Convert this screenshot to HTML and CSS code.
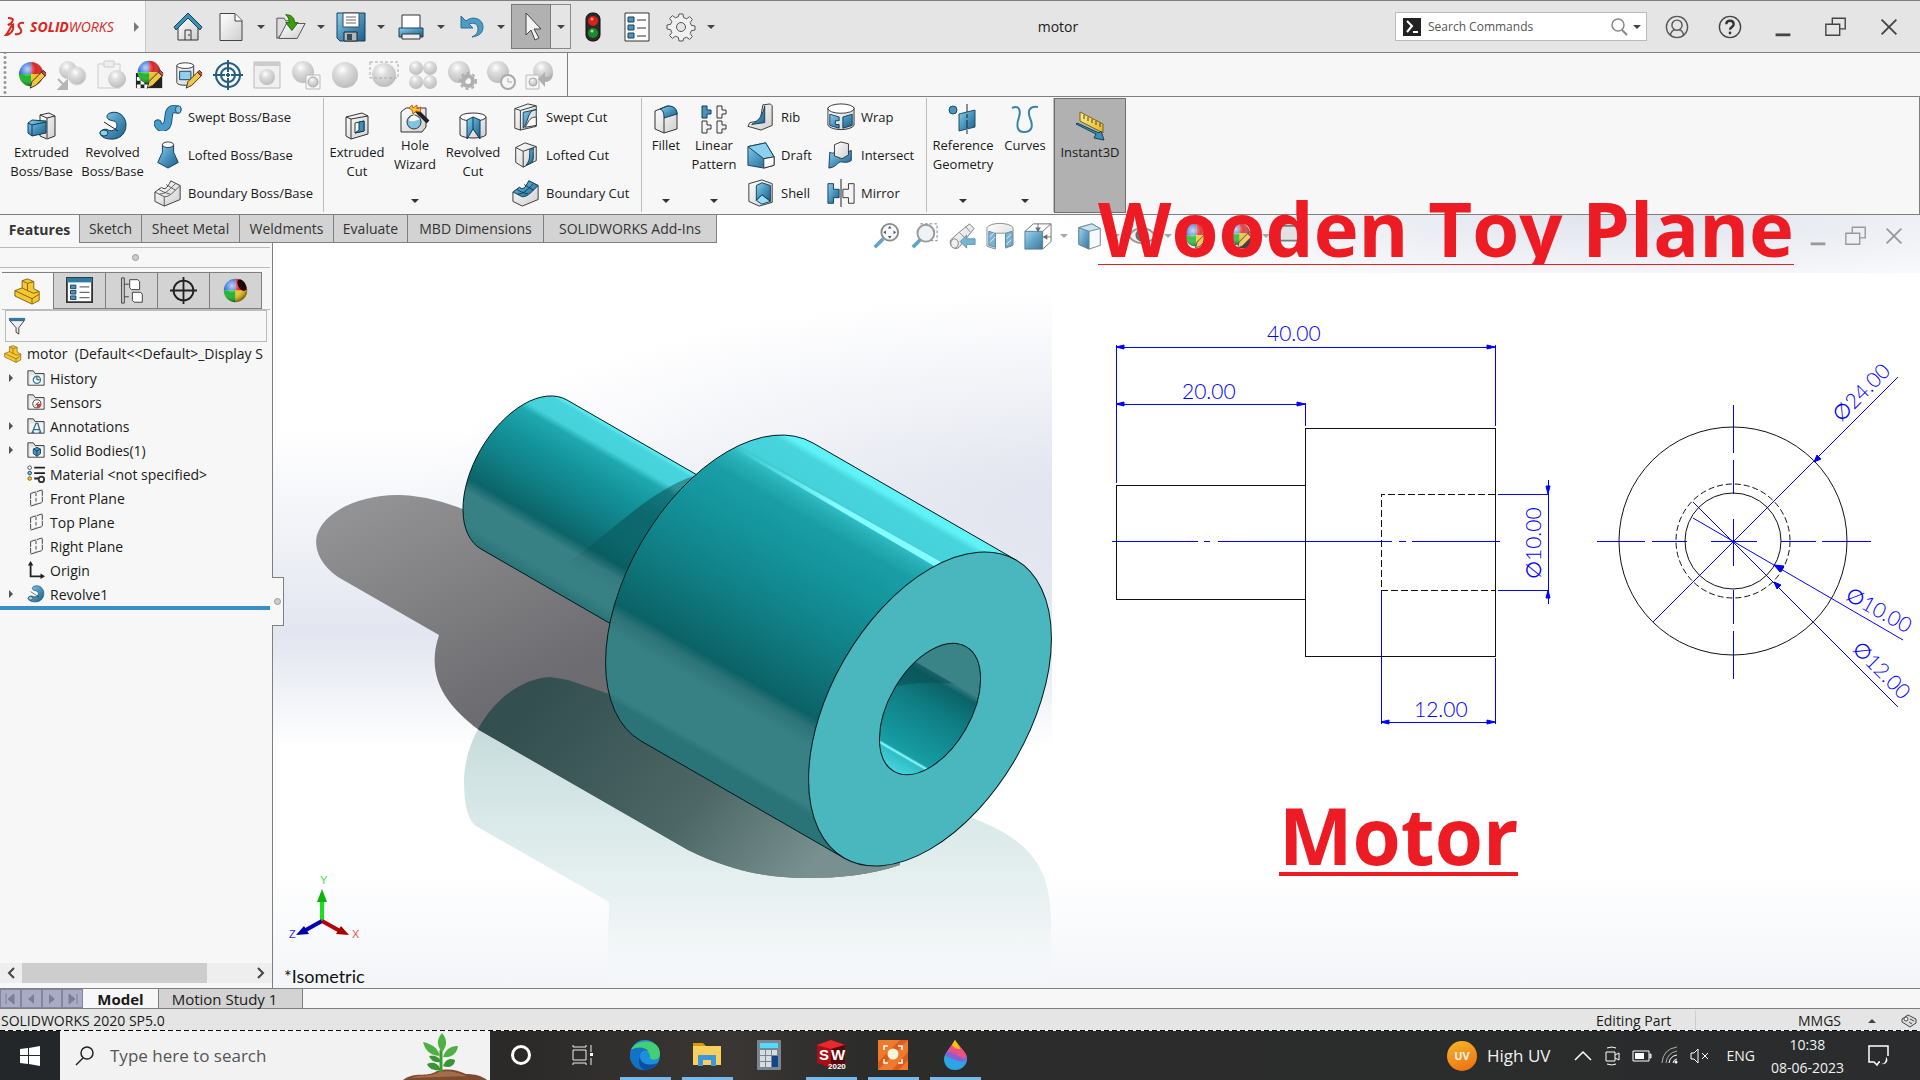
FILE: index.html
```
<!DOCTYPE html>
<html lang="en">
<head>
    <meta charset="utf-8">
    <title>motor</title>
    <link rel="stylesheet" href="styles.css">
</head>
<body>
    <!-- icon sheet -->
    <svg class="sheet" width="0" height="0" aria-hidden="true">
        <defs>
            <linearGradient id="blue" x1="0" y1="0" x2="1" y2="1"><stop offset="0" stop-color="#8fd0ee"/><stop offset=".5" stop-color="#4a94bd"/><stop offset="1" stop-color="#1d5f86"/></linearGradient>
            <linearGradient id="pale" x1="0" y1="0" x2="1" y2="1"><stop offset="0" stop-color="#fff"/><stop offset="1" stop-color="#cfcfcf"/></linearGradient>
            <linearGradient id="gold" x1="0" y1="0" x2="1" y2="1"><stop offset="0" stop-color="#fff08a"/><stop offset="1" stop-color="#e8b21c"/></linearGradient>
            <radialGradient id="grey" cx=".4" cy=".3" r=".7"><stop offset="0" stop-color="#fff"/><stop offset=".35" stop-color="#dedede"/><stop offset="1" stop-color="#bdbdbd"/></radialGradient>
            <radialGradient id="shine" cx=".35" cy=".3" r=".7"><stop offset="0" stop-color="#fff" stop-opacity=".7"/><stop offset=".5" stop-color="#fff" stop-opacity="0"/><stop offset="1" stop-color="#000" stop-opacity=".45"/></radialGradient>
        </defs>
        <symbol id="i-home" viewBox="0 0 30 30"><path d="M5 14v14h20V14L15 4z" fill="url(#pale)" stroke="#333"/><path d="M1 15 15 1l14 14-2 3L15 6 3 18z" fill="#3d8fb8" stroke="#17405a"/><path d="M12 28v-10h6v10M16 22v2" fill="none" stroke="#333"/></symbol>
        <symbol id="i-new" viewBox="0 0 30 30"><path d="M4 1.500h15l7 7v20H4z" fill="url(#pale)" stroke="#444"/><path d="M19 2v7h7" fill="#fff" stroke="#444"/></symbol>
        <symbol id="i-open" viewBox="0 0 34 30"><path d="M1 28V5h8l2 3h6v6z" fill="#ddd" stroke="#444"/><path d="M3 28 12 11h21l-9 17z" fill="url(#pale)" stroke="#444"/><path d="M11 1c7 0 10 4 10 9h4l-7 9-7-9h4c0-4-1-6-4-9z" fill="#3a9d12" stroke="#1d5f05"/></symbol>
        <symbol id="i-save" viewBox="0 0 30 30"><path d="M1 1h28v28H4l-3-3z" fill="url(#blue)" stroke="#123e59"/><path d="M7 1h16v14H7z" fill="#fff" stroke="#445"/><path d="M10 5h10M10 8h10M10 11h10" stroke="#666"/><path d="M8 20h13v9H8z" fill="#b5b5b5" stroke="#222"/><path d="M11 22h5v6h-5z" fill="#2e4e62"/></symbol>
        <symbol id="i-print" viewBox="0 0 30 30"><path d="M6 3h18v14H6z" fill="#fff" stroke="#333"/><path d="M3 16h24v9H3z" fill="url(#blue)" stroke="#17405a"/><path d="M6 22h18v5H6z" fill="#eee" stroke="#333"/></symbol>
        <symbol id="i-undo" viewBox="0 0 30 30"><path d="M5 4v12h12l-4-4c5-2 9 0 9 5 0 4-2 6-6 8 7-1 11-4 11-10 0-8-10-12-17-6z" fill="#4f9bc4" stroke="#2c6f96"/></symbol>
        <symbol id="i-cursor" viewBox="0 0 30 30"><path d="M10 1v22l5-5 4 10 4-2-5-9h7z" fill="#f3f3f3" stroke="#444"/></symbol>
        <symbol id="i-traffic" viewBox="0 0 30 30"><rect x="8" y="1" width="14" height="28" rx="6" fill="#2b2b2b" stroke="#111"/><circle cx="15" cy="9" r="5" fill="#e01e14"/><circle cx="15" cy="21" r="5" fill="#1b8a2c"/><circle cx="14" cy="7" r="1.500" fill="#ff9d8e"/><circle cx="14" cy="19" r="1.500" fill="#9fe0a2"/></symbol>
        <symbol id="i-list" viewBox="0 0 30 30"><path d="M3 1h24v28H3z" fill="#fff" stroke="#333"/><g fill="#4a94bd" stroke="#17405a"><path d="M6 5h6v5H6zM6 13h6v5H6zM6 21h6v5H6z"/></g><path d="M15 8h9M15 16h9M15 24h9" stroke="#333"/></symbol>
        <symbol id="i-gear" viewBox="0 0 30 30"><path d="m13 2 4 0 .6 3.600 3 1.200 3-2.200 2.800 2.800-2.200 3 1.200 3 3.600.6v4l-3.600.6-1.200 3 2.200 3-2.800 2.800-3-2.200-3 1.200L17 29h-4l-.6-3.600-3-1.200-3 2.200-2.800-2.800 2.200-3-1.200-3L1 17v-4l3.600-.6 1.200-3-2.200-3L6.400 3.600l3 2.200 3-1.200z" fill="#f1f1f1" stroke="#555"/><circle cx="15" cy="15" r="4.500" fill="#e5e5e5" stroke="#555"/></symbol>
        <symbol id="i-ball" viewBox="0 0 30 30"><path d="M15 15V2A13 13 0 0 0 2 15z" fill="#2f6fe0"/><path d="M15 15h13A13 13 0 0 0 15 2z" fill="#dc2222"/><path d="M15 15H2a13 13 0 0 0 13 13z" fill="#19b52a"/><path d="M15 15v13a13 13 0 0 0 13-13z" fill="#f0c419"/><circle cx="15" cy="15" r="13" fill="url(#shine)"/></symbol>
        <symbol id="i-pencil" viewBox="0 0 30 30"><path d="m13 29 2-7L25 12l4 4-10 10z" fill="#f5c542" stroke="#333"/><path d="m25 12 2-2 4 4-2 2z" fill="#d8453a" stroke="#333"/></symbol>
        <symbol id="i-paint" viewBox="0 0 32 30"><use href="#i-ball" x="-1" y="-1" width="30" height="30"/><use href="#i-pencil" width="30" height="30"/></symbol>
        <symbol id="i-check" viewBox="0 0 32 30"><path d="M1 13h28v16H1z" fill="#222"/><path d="M2 17h4v4H2zM6 21h4v4H6zM10 25h4v4h-4zM2 25h4v4H2zM22 14h4v4h-4z" fill="#fff"/><use href="#i-ball" y="-2" x="1" width="28" height="28"/><use href="#i-pencil" width="30" height="30"/></symbol>
        <symbol id="i-can" viewBox="0 0 32 30"><path d="M3 5v18c0 4 18 4 18 0V5" fill="url(#pale)" stroke="#333"/><ellipse cx="12" cy="5" rx="9" ry="3" fill="#fff" stroke="#333"/><path d="M6 11h12v9H6z" fill="#8fd0ee" stroke="#17405a"/><use href="#i-pencil" width="30" height="30"/></symbol>
        <symbol id="i-target" viewBox="0 0 30 30"><g fill="none" stroke="#245d80" stroke-width="2"><circle cx="15" cy="15" r="12"/><circle cx="15" cy="15" r="7"/><path d="M15 0v12M15 18v12M0 15h12M18 15h12M13 15h4M15 13v4"/></g></symbol>
        <symbol id="i-g1" viewBox="0 0 30 30"><circle cx="11" cy="10" r="9" fill="url(#grey)"/><circle cx="20" cy="16" r="9" fill="url(#grey)" stroke="#ddd"/><path d="m1 19 7 7M10 21v8H2z" fill="#b5b5b5" stroke="#b5b5b5" stroke-width="2"/></symbol>
        <symbol id="i-g2" viewBox="0 0 30 30"><path d="M2 4h22v24H2z" fill="#f4f4f4" stroke="#ccc"/><path d="M8 1h10v6H8z" fill="#eee" stroke="#ccc"/><circle cx="21" cy="19" r="9" fill="url(#grey)"/></symbol>
        <symbol id="i-g3" viewBox="0 0 30 30"><path d="M2 2h26v26H2z" fill="#f0f0f0" stroke="#bbb"/><path d="M2 2h26v4H2z" fill="#ccc"/><circle cx="15" cy="17" r="8" fill="url(#grey)"/></symbol>
        <symbol id="i-g4" viewBox="0 0 30 30"><circle cx="12" cy="12" r="11" fill="url(#grey)"/><path d="M15 15h14v14H15z" fill="#f6f6f6" stroke="#bbb"/><circle cx="22" cy="22" r="5" fill="url(#grey)" stroke="#aaa"/></symbol>
        <symbol id="i-g5" viewBox="0 0 30 30"><circle cx="15" cy="15" r="13" fill="url(#grey)"/></symbol>
        <symbol id="i-g6" viewBox="0 0 30 30"><circle cx="15" cy="15" r="12" fill="url(#grey)"/><path d="M1 2h28v16H1z" fill="none" stroke="#aaa" stroke-dasharray="3 2"/></symbol>
        <symbol id="i-g7" viewBox="0 0 30 30"><g fill="url(#grey)"><circle cx="8" cy="8" r="7"/><circle cx="22" cy="8" r="7"/><circle cx="8" cy="22" r="7"/><circle cx="22" cy="22" r="7"/></g></symbol>
        <symbol id="i-g8" viewBox="0 0 30 30"><circle cx="12" cy="12" r="11" fill="url(#grey)"/><circle cx="21" cy="21" r="5" fill="none" stroke="#b0b0b0" stroke-width="4"/><circle cx="21" cy="21" r="8" fill="none" stroke="#b0b0b0" stroke-width="2" stroke-dasharray="3 3"/></symbol>
        <symbol id="i-g9" viewBox="0 0 30 30"><circle cx="12" cy="12" r="11" fill="url(#grey)"/><circle cx="22" cy="22" r="7" fill="#f6f6f6" stroke="#aaa" stroke-width="2"/><path d="M22 18v4h4" fill="none" stroke="#aaa"/></symbol>
        <symbol id="i-g10" viewBox="0 0 30 30"><circle cx="18" cy="11" r="10" fill="url(#grey)"/><path d="M1 15h13v14H1z" fill="#f6f6f6" stroke="#bbb"/><circle cx="8" cy="22" r="4" fill="url(#grey)" stroke="#aaa"/><path d="M28 12c0 8-4 10-8 10v5l-7-8 7-7v5c4 0 6-1 8-5z" fill="#b0b0b0"/></symbol>

        <symbol id="i-extrude" viewBox="0 0 30 30"><path d="m13 4 9-2 6 3v20l-8 3-7-3z" fill="url(#pale)" stroke="#333"/><path d="m20 7 8-2M20 7v20M13 4l7 3" fill="none" stroke="#333"/><path d="m1 12 4-3 14 1v12L5 25l-4-3z" fill="url(#blue)" stroke="#0f3c58"/><path d="m1 12 4 2 14-3M5 14v11" fill="none" stroke="#0f3c58"/></symbol>
        <symbol id="i-revolve" viewBox="0 0 30 30"><path d="M12 2c8-3 16 3 16 12 0 10-8 15-16 14-5 0-10-3-10-6 0-3 6-5 8-3 5 2 9-1 9-5 0-4-4-4-7-5-4-1-4-6 0-7z" fill="url(#blue)" stroke="#0f3c58"/><path d="m6 11 14 9" stroke="#222"/><ellipse cx="6" cy="22" rx="4" ry="3" fill="#8fd0ee" stroke="#0f3c58"/></symbol>
        <symbol id="i-sweep" viewBox="0 0 30 30"><path d="M4 22c2 7 10 5 11-2l1-8c1-6 5-6 9-5" fill="none" stroke="#17506f" stroke-width="9" stroke-linecap="round"/><path d="M4 22c2 7 10 5 11-2l1-8c1-6 5-6 9-5" fill="none" stroke="#4a9cc8" stroke-width="7" stroke-linecap="round"/><ellipse cx="26" cy="7" rx="3" ry="4" fill="#7cc0e2" stroke="#17506f"/></symbol>
        <symbol id="i-loft" viewBox="0 0 30 30"><path d="M9 4v8L4 23l11 6 11-6-5-11V4z" fill="url(#blue)" stroke="#0f3c58"/><ellipse cx="15" cy="4" rx="6" ry="3" fill="#fff" stroke="#333"/></symbol>
        <symbol id="i-bound" viewBox="0 0 30 30"><path d="M1 14 8 9c4 3 6 1 10-7l10 5v15L11 29 1 24z" fill="url(#pale)" stroke="#333"/><path d="m1 14 10 5c5 0 7-2 17-12M11 19v10M6 16c6 0 9-3 17-11M5 11c3 2 7 4 12 5M13 6l10 6" fill="none" stroke="#555"/></symbol>
        <symbol id="i-boundcut" viewBox="0 0 30 30"><path d="M1 14 8 9c4 3 6 1 10-7l10 5v15L11 29 1 24z" fill="url(#pale)" stroke="#333"/><path d="M1 14 8 9c4 3 6 1 10-7l10 5c-10 10-12 12-17 12z" fill="url(#blue)" stroke="#0f3c58"/><path d="M6 16c6 0 9-3 17-11M5 11c3 2 7 4 12 5M13 6l10 6" fill="none" stroke="#0f3c58"/></symbol>
        <symbol id="i-cut" viewBox="0 0 30 30"><path d="m4 6 16-4 6 3v18L9 28l-5-3z" fill="url(#pale)" stroke="#333"/><path d="m4 6 5 2 17-3M9 8v20" fill="none" stroke="#333"/><path d="m13 12 9-2v10l-9 2z" fill="#fff" stroke="#333"/><path d="m13 22 4-3v-8l5-1v10z" fill="#3d8fb8" stroke="#0f3c58"/></symbol>
        <symbol id="i-wizard" viewBox="0 0 30 30"><path d="m1 8 5-4h20v19l-4 5H1z" fill="url(#pale)" stroke="#333"/><circle cx="14" cy="18" r="7" fill="#7fc4e6" stroke="#333"/><path d="M14 11c-9 5-5 9 6 4z" fill="#fff"/><path d="m16 6 12 12" stroke="#222" stroke-width="4"/><path d="m9 4 3-3 1 3 4-3v4l4-2-1 5-4-1-3 3-1-4z" fill="#ffc928" stroke="#c8541d"/></symbol>
        <symbol id="i-revcut" viewBox="0 0 30 30"><path d="M2 6v18c4 4 22 4 26 0V6" fill="url(#pale)" stroke="#333"/><ellipse cx="15" cy="6" rx="13" ry="4" fill="#fff" stroke="#333"/><path d="m9 9 6-3 7 3v19l-7-10-6 10z" fill="url(#blue)" stroke="#0f3c58"/><path d="M15 6v12" stroke="#0f3c58"/></symbol>
        <symbol id="i-sweepcut" viewBox="0 0 30 30"><path d="m3 6 14-5 9 2v22L9 29l-6-2z" fill="url(#pale)" stroke="#333"/><path d="m3 6 6 2 17-5M9 8v21" fill="none" stroke="#333"/><path d="M26 7c-10 1-7 11-14 20V10z" fill="url(#blue)" stroke="#0f3c58"/><path d="M14 26c3-4 4-11 12-11v9z" fill="#fff" stroke="#333"/></symbol>
        <symbol id="i-loftcut" viewBox="0 0 30 30"><path d="m4 7 10-5 12 4v15l-14 7-8-5z" fill="url(#pale)" stroke="#333"/><path d="m4 7 8 4 14-5M12 11v17" fill="none" stroke="#333"/><path d="M19 9c0 9 0 12-4 17l7-4c2-5 0-9 1-14z" fill="url(#blue)" stroke="#0f3c58"/></symbol>
        <symbol id="i-fillet" viewBox="0 0 30 30"><path d="M4 7 16 2c6 0 10 3 10 8v15l-13 4-9-4z" fill="url(#pale)" stroke="#333"/><path d="M9 5l8-3c6 0 9 3 9 8l-13 4c0-5-1-8-4-9z" fill="url(#blue)" stroke="#0f3c58"/><path d="M13 14v15" stroke="#333"/></symbol>
        <symbol id="i-pattern" viewBox="0 0 30 30"><g fill="#f3f3f3" stroke="#333"><path d="M3 2h5v4h4v4H8v4H3z" fill="#4a94bd" stroke="#0f3c58"/><path d="M18 2h5v4h4v4h-4v4h-5zM3 17h5v4h4v4H8v4H3zM18 17h5v4h4v4h-4v4h-5z"/></g></symbol>
        <symbol id="i-rib" viewBox="0 0 30 30"><path d="m17 2 8-1 2 2v21l-12 5L1 25l2-4 11-2z" fill="url(#pale)" stroke="#333"/><path d="M19 3v18L5 23C14 18 17 12 19 3z" fill="url(#blue)" stroke="#0f3c58"/></symbol>
        <symbol id="i-draft" viewBox="0 0 30 30"><path d="M1 6 20 2l9 15v9l-11 3-17-3z" fill="url(#blue)" stroke="#0f3c58"/><path d="M1 6 20 2l9 15-11 2z" fill="#8bd0ee" stroke="#0f3c58"/><path d="m18 19 11-2v9l-11 3z" fill="#fff" stroke="#333"/></symbol>
        <symbol id="i-shell" viewBox="0 0 30 30"><path d="m2 5 14-4 11 4v20l-14 4L2 24z" fill="url(#pale)" stroke="#333"/><path d="m10 7 6-3 9 3v17l-9-7-6 6z" fill="url(#blue)" stroke="#0f3c58"/><path d="m10 23 6-6 9 7-9 3z" fill="#9bdcf5" stroke="#0f3c58"/></symbol>
        <symbol id="i-wrap" viewBox="0 0 30 30"><path d="M1 5v19c4 6 24 6 28 0V5" fill="url(#pale)" stroke="#333"/><ellipse cx="15" cy="6" rx="14" ry="5" fill="#fff" stroke="#333"/><path d="m3 12 10 3v4H9v4h4v4l-10-3zM17 15l10-3v12l-10 3z" fill="url(#blue)" stroke="#0f3c58"/></symbol>
        <symbol id="i-intersect" viewBox="0 0 30 30"><path d="M3 12c5 3 5-2 9-2 6 0 7 4 14 0v11c-7 4-9 0-13 2-3 2-4 5-11 6z" fill="url(#blue)" stroke="#0f3c58"/><path d="m8 4 7-3 8 2v12l-7 4-8-3z" fill="url(#pale)" stroke="#333"/></symbol>
        <symbol id="i-mirror" viewBox="0 0 30 30"><path d="M1 5h6v6h6v9H7v6H1z" fill="url(#blue)" stroke="#0f3c58"/><path d="M29 5h-6v6h-6v9h6v6h6z" fill="#f3f3f3" stroke="#333"/><path d="M15 0v30" stroke="#111"/></symbol>
        <symbol id="i-ref" viewBox="0 0 30 30"><circle cx="5" cy="6" r="4" fill="#4a94bd" stroke="#17506f"/><path d="m11 10 16-4v17l-16 4z" fill="url(#blue)" stroke="#17506f"/><path d="M19 0v30" stroke="#222" stroke-dasharray="8 2 4 2"/></symbol>
        <symbol id="i-curves" viewBox="0 0 30 30"><path d="M2 4c7-3 9 2 7 9-3 9-2 15 5 15 9 0 9-7 6-14-3-8 0-12 8-11" fill="none" stroke="#3a82ab" stroke-width="2"/></symbol>
        <symbol id="i-instant" viewBox="0 0 30 30"><path d="m5 1 23 12v9L5 10z" fill="url(#gold)" stroke="#7b6316"/><path d="M9 4v4M13 6v4M17 8v4M21 10v4M25 12v4" stroke="#444"/><path d="m1 13 20 10-2 4 10 2-3-9-2 2L2 12z" fill="#3d8fb8" stroke="#17405a"/></symbol>

        <symbol id="i-zoomfit" viewBox="0 0 30 30"><circle cx="19" cy="11" r="9" fill="#f4f8fb" stroke="#777" stroke-width="2"/><path d="m19 4 2 3h-4zM19 18l2-3h-4zM12 11l3-2v4zM26 11l-3-2v4z" fill="#444"/><path d="m12 18-9 9" stroke="#4a94bd" stroke-width="4"/></symbol>
        <symbol id="i-zoomarea" viewBox="0 0 30 30"><path d="M11 2h18v18H16" fill="none" stroke="#666" stroke-dasharray="3 2"/><circle cx="17" cy="12" r="9" fill="#eef2f5" stroke="#888" stroke-width="2"/><path d="m11 19-8 8" stroke="#4a94bd" stroke-width="4"/></symbol>
        <symbol id="i-prev" viewBox="0 0 30 30"><path d="m3 19 9-8 11-9 5 5-8 10-8 10c-4 4-12-2-9-8z" fill="url(#pale)" stroke="#666"/><path d="m12 11 7 7M19 5l5 6" stroke="#777"/><ellipse cx="7" cy="23" rx="4" ry="5" fill="#eee" stroke="#666"/><path d="M29 18H20v-4l-7 7 7 7v-4h9z" fill="#5fa9cf" stroke="#4a7f9c"/></symbol>
        <symbol id="i-section" viewBox="0 0 30 30"><path d="M1 6c4-6 24-6 28 0v19l-8 3V12H10v17l-9-3z" fill="url(#pale)" stroke="#777"/><path d="m3 10 7 2v15l-7-2zM21 12l7-2v15l-7 2z" fill="#63a8cc" stroke="#41728d"/><path d="m4 16 5-5M4 22l6-6M22 18l5-5M22 24l5-5" stroke="#eef"/></symbol>
        <symbol id="i-orient" viewBox="0 0 30 30"><path d="M1 10h19v19H1z" fill="url(#blue)" stroke="#37657f"/><path d="m1 10 9-8h19v19l-9 8M20 10l9-8M15 2v8M29 16h-8" fill="none" stroke="#555"/><path d="m12 6 3 5 3-5zM25 13l-5 3 5 3z" fill="#555"/></symbol>
        <symbol id="i-cube" viewBox="0 0 30 30"><path d="m3 6 14-4 9 5v18l-12 4-11-5z" fill="#f7fafc" stroke="#4f6f82"/><path d="M3 6v18l11 5V10z" fill="url(#blue)" stroke="#4f6f82"/><path d="m3 6 14-4 9 5-12 3z" fill="#bfe2f2" stroke="#4f6f82"/></symbol>
        <symbol id="i-eye" viewBox="0 0 30 30"><path d="M1 15C7 4 23 4 29 15 23 25 7 25 1 15z" fill="#eee" stroke="#888" stroke-width="2"/><circle cx="15" cy="14" r="7" fill="#555"/></symbol>
        <symbol id="i-screen" viewBox="0 0 30 30"><path d="M2 4h25v16H2z" fill="#dedede" stroke="#666" stroke-width="2"/></symbol>

        <symbol id="i-part" viewBox="0 0 30 30"><path d="m1 14 8-3V3l6-2 7 3v8l6 3v10l-8 4L1 20z" fill="#f5c832" stroke="#7a5a0b"/><path d="m1 14 19 9 8-5M20 23v6M9 3l6 3 7-2M15 6v8l7 3 6-2M9 11l6 3" fill="none" stroke="#7a5a0b"/></symbol>
        <symbol id="i-props" viewBox="0 0 30 30"><path d="M1 1h28v27H1z" fill="#fff" stroke="#333" stroke-width="2"/><path d="M1 1h28v5H1z" fill="#2c7ca6"/><path d="M5 9h6v4H5zM5 15h6v4H5zM5 21h6v4H5z" fill="#4a94bd" stroke="#17405a"/><path d="M15 11h11M15 17h11M15 23h11" stroke="#333"/></symbol>
        <symbol id="i-config" viewBox="0 0 30 30"><path d="M4 1v28M7 1v28M4 1h3M4 29h3M7 8h5M7 22h5" stroke="#333" fill="none"/><path d="M13 3h9l2 2v9h-9l-2-2zM16 17h9l2 2v9h-9l-2-2z" fill="#fff" stroke="#333"/></symbol>
        <symbol id="i-dim" viewBox="0 0 30 30"><g fill="none" stroke="#222" stroke-width="2"><circle cx="15" cy="15" r="11"/><path d="M15 0v30M0 15h30"/></g></symbol>
        <symbol id="i-look" viewBox="0 0 30 30"><use href="#i-ball" width="30" height="30"/><ellipse cx="22" cy="9" rx="4" ry="7" fill="#1b0505" transform="rotate(-30 22 9)"/></symbol>
        <symbol id="i-filter" viewBox="0 0 20 20"><path d="M2 4h16l-6 8v7l-3-2v-5z" fill="#eee" stroke="#333"/><path d="M1 1h18v3H1z" fill="#2c7ca6"/></symbol>
        <symbol id="i-folder" viewBox="0 0 20 20"><path d="M1 18V2h6l2 3h10v13z" fill="#e3e3e3" stroke="#333"/><path d="M3 7h15v10H3z" fill="#f5f5f5"/></symbol>
        <symbol id="i-history" viewBox="0 0 20 20"><use href="#i-folder"/><circle cx="11" cy="12" r="4" fill="#fff" stroke="#2c7ca6" stroke-width="1.500"/><path d="M11 9v3h3" stroke="#222" fill="none"/></symbol>
        <symbol id="i-sensor" viewBox="0 0 20 20"><use href="#i-folder"/><circle cx="11" cy="12" r="4.500" fill="#fff" stroke="#333"/><path d="M11 12h4.500a4.500 4.500 0 0 1-4.500 4.500z" fill="#e0391c"/><path d="m9 14 4-4" stroke="#333"/></symbol>
        <symbol id="i-note" viewBox="0 0 20 20"><use href="#i-folder"/><path d="m6 17 4-10h2l3 10M8 14h6M5 17h3M13 17h3" fill="none" stroke="#2c6f96" stroke-width="1.500"/></symbol>
        <symbol id="i-bodies" viewBox="0 0 20 20"><use href="#i-folder"/><path d="m7 9 4-2 4 2v5l-4 3-4-3z" fill="#4a94bd" stroke="#17405a"/><path d="m7 9 4 2 4-2M11 11v6" stroke="#17405a" fill="none"/></symbol>
        <symbol id="i-material" viewBox="0 0 20 20"><path d="M8 3h12M8 9h12M8 15h5" stroke="#222" stroke-width="2"/><circle cx="3" cy="3" r="2" fill="#fff" stroke="#444"/><circle cx="3" cy="9" r="2" fill="#6fc3ea" stroke="#17405a"/><circle cx="3" cy="15" r="2" fill="#f5c832" stroke="#7a5a0b"/><circle cx="16" cy="16" r="3" fill="none" stroke="#333" stroke-width="2"/></symbol>
        <symbol id="i-plane" viewBox="0 0 20 20"><path d="M4 5v14l13-4V1z" fill="none" stroke="#333" stroke-dasharray="6 1"/><path d="M10 4v14" stroke="#333" stroke-dasharray="4 2"/></symbol>
        <symbol id="i-origin" viewBox="0 0 20 20"><path d="M4 3v14h14" fill="none" stroke="#222" stroke-width="2"/><path d="m4 0 3 5H1zM20 17l-5-3v6z" fill="#222"/></symbol>

        <symbol id="i-user" viewBox="0 0 26 26"><g fill="none" stroke="#555" stroke-width="1.500"><circle cx="13" cy="13" r="11.500"/><circle cx="13" cy="11" r="5.500"/><path d="M6 22c0-4 3-6 5-6M20 22c0-4-3-6-5-6"/></g></symbol>
        <symbol id="i-help" viewBox="0 0 26 26"><circle cx="13" cy="13" r="11.500" fill="none" stroke="#444" stroke-width="1.500"/><path d="M9 10c0-5 8-5 8 0 0 3-4 3-4 6" fill="none" stroke="#333" stroke-width="2.500"/><circle cx="13" cy="19.500" r="1.500" fill="#333"/></symbol>
        <symbol id="i-min" viewBox="0 0 26 26"><path d="M5 20h16v3H5z" fill="currentColor"/></symbol>
        <symbol id="i-restore" viewBox="0 0 26 26"><path d="M9 10V3.500h14V15h-6M2 10h15v12H2z" fill="none" stroke="currentColor" stroke-width="1.500"/></symbol>
        <symbol id="i-close" viewBox="0 0 26 26"><path d="m5 5 16 16M21 5 5 21" stroke="currentColor" stroke-width="2"/></symbol>
    </svg>

    <header class="titlebar">
        <div class="brand">
            <svg class="brand-mark" viewBox="0 0 20 20" aria-hidden="true"><path d="M3 1c4 0 6 1 4 4-1 2-3 2-4 3 4-2 6 0 5 4-1 5-6 6-7 6 2-2 5-10 8-11M19 6c-5-1-7 2-4 5 3 4 0 7-5 6" fill="none" stroke="#d8261c" stroke-width="2"/></svg>
            <span class="brand-name"><b>SOLID</b>WORKS</span>
            <button class="brand-more" aria-label="Show menus"></button>
        </div>
        <div class="quick">
            <button class="tool home" aria-label="Home"><svg><use href="#i-home"/></svg></button>
            <button class="tool" aria-label="New"><svg><use href="#i-new"/></svg></button><button class="caret" aria-label="New options"></button>
            <button class="tool" aria-label="Open"><svg><use href="#i-open"/></svg></button><button class="caret" aria-label="Open options"></button>
            <button class="tool" aria-label="Save"><svg><use href="#i-save"/></svg></button><button class="caret" aria-label="Save options"></button>
            <button class="tool" aria-label="Print"><svg><use href="#i-print"/></svg></button><button class="caret" aria-label="Print options"></button>
            <button class="tool" aria-label="Undo"><svg><use href="#i-undo"/></svg></button><button class="caret" aria-label="Undo options"></button>
            <button class="tool picked" aria-label="Select"><svg><use href="#i-cursor"/></svg></button><button class="caret picked-caret" aria-label="Select options"></button>
            <button class="tool" aria-label="Rebuild"><svg><use href="#i-traffic"/></svg></button>
            <button class="tool spaced" aria-label="File properties"><svg><use href="#i-list"/></svg></button>
            <button class="tool spaced" aria-label="Options"><svg><use href="#i-gear"/></svg></button><button class="caret" aria-label="Options menu"></button>
        </div>
        <div class="doc-name">motor</div>
        <div class="command-search">
            <svg class="prompt" viewBox="0 0 18 18" aria-hidden="true"><path d="M0 0h18v18H0z" fill="#222"/><path d="m4 3 5 5-5 6M10 14h5" fill="none" stroke="#fff" stroke-width="2"/></svg>
            <input type="text" placeholder="Search Commands" aria-label="Search Commands">
            <svg class="lens" viewBox="0 0 18 18" aria-hidden="true"><circle cx="8" cy="7" r="6" fill="none" stroke="#888" stroke-width="1.500"/><path d="m12 12 5 5" stroke="#888" stroke-width="2"/></svg>
            <button class="caret" aria-label="Search scope"></button>
        </div>
        <div class="window-buttons">
            <button aria-label="Account"><svg><use href="#i-user"/></svg></button>
            <button aria-label="Help"><svg><use href="#i-help"/></svg></button>
            <button aria-label="Minimize"><svg><use href="#i-min"/></svg></button>
            <button aria-label="Restore"><svg><use href="#i-restore"/></svg></button>
            <button aria-label="Close"><svg><use href="#i-close"/></svg></button>
        </div>
    </header>

    <div class="render-bar">
        <div class="render-tools">
            <button aria-label="Edit appearance"><svg><use href="#i-paint"/></svg></button>
            <button aria-label="Copy appearance"><svg><use href="#i-g1"/></svg></button>
            <button aria-label="Paste appearance"><svg><use href="#i-g2"/></svg></button>
            <button aria-label="Edit scene"><svg><use href="#i-check"/></svg></button>
            <button aria-label="Edit decal"><svg><use href="#i-can"/></svg></button>
            <button aria-label="Target"><svg><use href="#i-target"/></svg></button>
            <button aria-label="Preview"><svg><use href="#i-g3"/></svg></button>
            <button aria-label="Preview window"><svg><use href="#i-g4"/></svg></button>
            <button aria-label="Final render"><svg><use href="#i-g5"/></svg></button>
            <button aria-label="Render region"><svg><use href="#i-g6"/></svg></button>
            <button aria-label="Render configurations"><svg><use href="#i-g7"/></svg></button>
            <button aria-label="Render options"><svg><use href="#i-g8"/></svg></button>
            <button aria-label="Schedule render"><svg><use href="#i-g9"/></svg></button>
            <button aria-label="Recall render"><svg><use href="#i-g10"/></svg></button>
        </div>
    </div>

    <div class="ribbon">
        <div class="group boss">
            <button class="big"><svg><use href="#i-extrude"/></svg>Extruded Boss/Base</button>
            <button class="big"><svg><use href="#i-revolve"/></svg>Revolved Boss/Base</button>
            <div class="stack">
                <button><svg><use href="#i-sweep"/></svg>Swept Boss/Base</button>
                <button><svg><use href="#i-loft"/></svg>Lofted Boss/Base</button>
                <button><svg><use href="#i-bound"/></svg>Boundary Boss/Base</button>
            </div>
        </div>
        <div class="group cut">
            <button class="big"><svg><use href="#i-cut"/></svg>Extruded Cut</button>
            <button class="big menu"><svg><use href="#i-wizard"/></svg>Hole Wizard</button>
            <button class="big"><svg><use href="#i-revcut"/></svg>Revolved Cut</button>
            <div class="stack">
                <button><svg><use href="#i-sweepcut"/></svg>Swept Cut</button>
                <button><svg><use href="#i-loftcut"/></svg>Lofted Cut</button>
                <button><svg><use href="#i-boundcut"/></svg>Boundary Cut</button>
            </div>
        </div>
        <div class="group detail">
            <button class="big menu"><svg><use href="#i-fillet"/></svg>Fillet</button>
            <button class="big menu"><svg><use href="#i-pattern"/></svg>Linear Pattern</button>
            <div class="stack">
                <button><svg><use href="#i-rib"/></svg>Rib</button>
                <button><svg><use href="#i-draft"/></svg>Draft</button>
                <button><svg><use href="#i-shell"/></svg>Shell</button>
            </div>
            <div class="stack">
                <button><svg><use href="#i-wrap"/></svg>Wrap</button>
                <button><svg><use href="#i-intersect"/></svg>Intersect</button>
                <button><svg><use href="#i-mirror"/></svg>Mirror</button>
            </div>
        </div>
        <div class="group refs">
            <button class="big menu"><svg><use href="#i-ref"/></svg>Reference Geometry</button>
            <button class="big menu"><svg><use href="#i-curves"/></svg>Curves</button>
        </div>
        <button class="big instant"><svg><use href="#i-instant"/></svg>Instant3D</button>
    </div>

    <main class="workspace">
        <svg class="scene" viewBox="0 215 1920 773" preserveAspectRatio="xMinYMin meet" role="img" aria-label="Motor model and dimension sketch">
            <defs>
                <linearGradient id="body" gradientUnits="userSpaceOnUse" x1="813" y1="443" x2="641" y2="741">
                    <stop offset="0" stop-color="#5ff3f8"/><stop offset=".02" stop-color="#5ff3f8"/><stop offset=".04" stop-color="#48d4dc"/><stop offset=".11" stop-color="#46d2da"/><stop offset=".13" stop-color="#30bec6"/><stop offset=".15" stop-color="#27b0b7"/><stop offset=".2" stop-color="#1a9ea6"/><stop offset=".32" stop-color="#14939b"/><stop offset=".5" stop-color="#107e84"/><stop offset=".69" stop-color="#0b6266"/><stop offset=".72" stop-color="#2c7377"/><stop offset=".77" stop-color="#378084"/><stop offset=".92" stop-color="#378084"/><stop offset=".94" stop-color="#2a7377"/><stop offset="1" stop-color="#2a7377"/>
                </linearGradient>
                <linearGradient id="streak" gradientUnits="userSpaceOnUse" x1="735" y1="447" x2="938" y2="564"><stop offset="0" stop-color="#84fcff" stop-opacity="0"/><stop offset=".5" stop-color="#84fcff"/></linearGradient>
                <linearGradient id="shaft" gradientUnits="userSpaceOnUse" x1="567" y1="400" x2="481" y2="549">
                    <stop offset="0" stop-color="#5ff3f8"/><stop offset=".03" stop-color="#48d4dc"/><stop offset=".13" stop-color="#46d2da"/><stop offset=".17" stop-color="#1fa8b0"/><stop offset=".32" stop-color="#14939b"/><stop offset=".5" stop-color="#107e84"/><stop offset=".68" stop-color="#0b6468"/><stop offset=".75" stop-color="#378084"/><stop offset=".92" stop-color="#378084"/><stop offset="1" stop-color="#2a7377"/>
                </linearGradient>
                <linearGradient id="cast" gradientUnits="userSpaceOnUse" x1="650" y1="520" x2="615" y2="590"><stop offset="0" stop-color="#002a2d" stop-opacity=".38"/><stop offset="1" stop-color="#002a2d" stop-opacity="0"/></linearGradient>
                <linearGradient id="bore" gradientUnits="userSpaceOnUse" x1="966" y1="647" x2="894" y2="771">
                    <stop offset="0" stop-color="#2f787c"/><stop offset=".08" stop-color="#3a8387"/><stop offset=".26" stop-color="#378084"/><stop offset=".31" stop-color="#0b6266"/><stop offset=".5" stop-color="#0f7d83"/><stop offset=".8" stop-color="#15989f"/><stop offset=".86" stop-color="#1a9ea6"/><stop offset=".875" stop-color="#8dfcff"/><stop offset=".89" stop-color="#2fbcc4"/><stop offset="1" stop-color="#48d4dc"/>
                </linearGradient>
                <linearGradient id="shadow" gradientUnits="userSpaceOnUse" x1="400" y1="490" x2="500" y2="700"><stop offset="0" stop-color="#929294"/><stop offset="1" stop-color="#6d6c70"/></linearGradient>
                <linearGradient id="shadow2" gradientUnits="userSpaceOnUse" x1="550" y1="680" x2="800" y2="880"><stop offset="0" stop-color="#334f50"/><stop offset=".6" stop-color="#4d6666"/><stop offset="1" stop-color="#789090"/></linearGradient>
                <linearGradient id="mirror" x1="0" y1="0" x2="0" y2="1"><stop offset="0" stop-color="#bcd3d4"/><stop offset=".35" stop-color="#d3e4e4"/><stop offset=".6" stop-color="#e2eeee"/><stop offset=".8" stop-color="#eef4f5"/><stop offset="1" stop-color="#f5f8fa" stop-opacity="0"/></linearGradient>
                <path id="shadow-shape" d="M439 635 338 577C318 563 314 546 317 535c8-26 48-41 83-40 25 1 45 7 65 15L900 700v165c-30 10-60 13-94 13-47 0-83-11-118-28L479 730C450 708 424 680 439 635z"/>
                <path id="mirror-shape" d="M609 902 476 826c-10-8-12-26-12-49 4-54 45-98 86-100l18 3 400 136c50 20 83 40 83 105v50c0 10-20 17-60 17H607z"/>
                <clipPath id="in-mirror"><use href="#mirror-shape"/></clipPath>
                <clipPath id="in-bore"><ellipse cx="930" cy="709" rx="72" ry="41" transform="rotate(-60 930 709)"/></clipPath>
            </defs>

            <!-- floor: reflection and shadow -->
            <use href="#mirror-shape" fill="url(#mirror)"/>
            <use href="#shadow-shape" fill="url(#shadow)"/>
            <use href="#shadow-shape" fill="url(#shadow2)" clip-path="url(#in-mirror)"/>

            <!-- motor body -->
            <path d="M567 400A86 50-60 0 0 481 549L684 666 770 517z" fill="url(#shaft)" stroke="#001a1c"/>
            <path d="M694 476C650 490 612 532 566 564L640 607 720 500z" fill="url(#cast)"/>
            <path d="M813 443A172 99-60 0 0 641 741L844 858 1016 560z" fill="url(#body)" stroke="#001a1c"/>
            <path d="M735 446 941 562 936 567 735 449z" fill="url(#streak)"/>
            <ellipse cx="930" cy="709" rx="172" ry="99" transform="rotate(-60 930 709)" fill="#49b7bd" stroke="#001a1c"/>
            <g clip-path="url(#in-bore)">
                <path d="M860 630h140v160H860z" fill="url(#bore)"/>
                <path d="M880 690q40-12 85-5l-32-18-53-20z" fill="#0a4f53" opacity=".55"/>
                <path d="M904 655 990 705V630h-60z" fill="#3a8387"/>
            </g>
            <ellipse cx="930" cy="709" rx="72" ry="41" transform="rotate(-60 930 709)" fill="none" stroke="#001a1c"/>

            <!-- axis triad -->
            <g stroke-width="4"><path d="M322 920v-22" stroke="#1ce01c"/><path d="m322 921-18 10" stroke="#0000b4"/><path d="m322 921 18 10" stroke="#b40000"/></g>
            <path d="m322 889 5 13h-10z" fill="#0cb40c"/><path d="m296 935 13-1-5-8z" fill="#0000a8"/><path d="m349 935-13-1 5-8z" fill="#a80000"/>
            <g class="axis"><text x="320" y="884" fill="#3ee63e">Y</text><text x="289" y="938" fill="#2a2ae0">Z</text><text x="352" y="938" fill="#f05050">X</text></g>
            <text class="view-name" x="284" y="983">*Isometric</text>

            <!-- dimension sketch -->
            <path d="M1052 273h868v491h-868z" fill="#fff"/>
            <g class="outline"><path d="M1116 485h189v114h-189zM1305 428h190v228h-190z"/><path d="M1495 494h-114v96h114" stroke-dasharray="7 3"/></g>
            <g class="dims">
                <path d="M1116 345v138M1495 345v81M1116 347h379M1305 403v23M1116 404h189"/>
                <path d="M1381 590v134M1495 658v66M1381 722h114"/>
                <path d="M1548 480v124M1498 494h51M1498 590h51"/>
                <path d="M1112 541h86M1204 541h6M1218 541h174M1399 541h7M1412 541h88"/>
                <path d="M1733 405v48M1733 460v34M1733 519v47M1733 590v34M1733 631v48M1597 541h48M1652 541h35M1711 541h46M1781 541h35M1822 541h49"/>
            </g>
            <g class="arrows"><path d="M1116 347l8-2v4zM1495 347l-8-2v4zM1116 404l8-2v4zM1305 404l-8-2v4zM1381 722l8-2v4zM1495 722l-8-2v4zM1548 494l-2-8h4zM1548 590l-2 8h4zM1814 462l3-7 4 4zM1774 582l3 7 4-4zM1774 565l6 7 4-6z"/></g>
            <g class="round"><circle cx="1733" cy="541" r="114"/><circle cx="1733" cy="541" r="48"/><circle cx="1733" cy="541" r="57" stroke-dasharray="6 3"/></g>
            <path class="leader" d="M1653 622 1898 377M1693 502l205 205M1693 518l210 122"/>
            <g class="dim-text">
                <text x="1267" y="341">40.00</text><text x="1182" y="399">20.00</text><text x="1414" y="717">12.00</text>
                <text transform="translate(1541 579) rotate(-90)">&#8709;10.00</text>
                <text transform="translate(1841 423) rotate(-45)">&#8709;24.00</text>
                <text transform="translate(1844 599) rotate(29)">&#8709;10.00</text>
                <text transform="translate(1851 650) rotate(45)">&#8709;12.00</text>
            </g>
        </svg>

        <div class="tab-row">
            <nav class="tabs">
                <button class="active">Features</button><button>Sketch</button><button>Sheet Metal</button><button>Weldments</button><button>Evaluate</button><button>MBD Dimensions</button><button>SOLIDWORKS Add-Ins</button>
            </nav>
            <div class="headsup">
                <button aria-label="Zoom to fit"><svg><use href="#i-zoomfit"/></svg></button>
                <button aria-label="Zoom to area"><svg><use href="#i-zoomarea"/></svg></button>
                <button aria-label="Previous view"><svg><use href="#i-prev"/></svg></button>
                <button aria-label="Section view"><svg><use href="#i-section"/></svg></button>
                <button aria-label="View orientation"><svg><use href="#i-orient"/></svg></button><i class="caret"></i>
                <button aria-label="Display style"><svg><use href="#i-cube"/></svg></button><i class="caret"></i>
                <button aria-label="Hide or show items"><svg><use href="#i-eye"/></svg></button><i class="caret"></i>
                <button class="look" aria-label="Edit appearance"><svg><use href="#i-paint"/></svg></button>
                <button aria-label="Apply scene"><svg><use href="#i-check"/></svg></button><i class="caret"></i>
                <button aria-label="View settings"><svg><use href="#i-screen"/></svg></button>
            </div>
            <div class="doc-buttons">
                <button aria-label="Minimize document"><svg><use href="#i-min"/></svg></button>
                <button aria-label="Restore document"><svg><use href="#i-restore"/></svg></button>
                <button aria-label="Close document"><svg><use href="#i-close"/></svg></button>
            </div>
        </div>

        <aside class="sidebar">
            <div class="grip"><i class="dot"></i></div>
            <div class="panel-tabs">
                <button class="active" aria-label="FeatureManager"><svg><use href="#i-part"/></svg></button>
                <button aria-label="PropertyManager"><svg><use href="#i-props"/></svg></button>
                <button aria-label="ConfigurationManager"><svg><use href="#i-config"/></svg></button>
                <button aria-label="DimXpertManager"><svg><use href="#i-dim"/></svg></button>
                <button aria-label="DisplayManager"><svg><use href="#i-look"/></svg></button>
            </div>
            <div class="filter"><svg><use href="#i-filter"/></svg><input type="text" aria-label="Filter tree"></div>
            <div class="root"><svg><use href="#i-part"/></svg>motor&nbsp; (Default&lt;&lt;Default&gt;_Display S</div>
            <ul class="tree">
                <li class="closed"><svg><use href="#i-history"/></svg>History</li>
                <li><svg><use href="#i-sensor"/></svg>Sensors</li>
                <li class="closed"><svg><use href="#i-note"/></svg>Annotations</li>
                <li class="closed"><svg><use href="#i-bodies"/></svg>Solid Bodies(1)</li>
                <li><svg><use href="#i-material"/></svg>Material &lt;not specified&gt;</li>
                <li><svg><use href="#i-plane"/></svg>Front Plane</li>
                <li><svg><use href="#i-plane"/></svg>Top Plane</li>
                <li><svg><use href="#i-plane"/></svg>Right Plane</li>
                <li><svg><use href="#i-origin"/></svg>Origin</li>
                <li class="closed"><svg><use href="#i-revolve"/></svg>Revolve1</li>
            </ul>
            <div class="scrollbar">
                <button aria-label="Scroll left"><svg viewBox="0 0 10 12"><path d="M8 1 3 6l5 5" fill="none" stroke="#444" stroke-width="2"/></svg></button>
                <div class="track"><div class="thumb"></div></div>
                <button aria-label="Scroll right"><svg viewBox="0 0 10 12"><path d="m2 1 5 5-5 5" fill="none" stroke="#444" stroke-width="2"/></svg></button>
            </div>
            <div class="splitter"><i class="dot"></i></div>
        </aside>

        <h1 class="headline">Wooden Toy Plane</h1>
        <h2 class="subhead">Motor</h2>
    </main>

    <div class="model-tabs">
        <div class="steps">
            <button aria-label="First tab"><svg viewBox="0 0 14 14"><path d="M3 2v10M11 2 5 7l6 5z" stroke="#7c7e96" fill="#7c7e96"/></svg></button>
            <button aria-label="Previous tab"><svg viewBox="0 0 14 14"><path d="m10 2-6 5 6 5z" fill="#7c7e96"/></svg></button>
            <button aria-label="Next tab"><svg viewBox="0 0 14 14"><path d="m4 2 6 5-6 5z" fill="#7c7e96"/></svg></button>
            <button aria-label="Last tab"><svg viewBox="0 0 14 14"><path d="M11 2v10M3 2l6 5-6 5z" stroke="#7c7e96" fill="#7c7e96"/></svg></button>
        </div>
        <button class="model active">Model</button>
        <button class="model">Motion Study 1</button>
    </div>

    <div class="status">
        <span>SOLIDWORKS 2020 SP5.0</span>
        <span class="state">Editing Part</span>
        <span class="units">MMGS</span>
        <i class="up"></i>
        <svg class="tag" viewBox="0 0 16 14"><path d="m1 5 6-4 8 4v4l-6 4-8-5z" fill="#ddd" stroke="#444"/><circle cx="5" cy="5" r="2" fill="#fff" stroke="#444"/><path d="m9 5 4 2M8 8l3 2" stroke="#444"/></svg>
    </div>

    <footer class="taskbar">
        <button class="start" aria-label="Start"><svg viewBox="0 0 20 20"><path d="m0 3 8-1v7H0zM9 2l11-2v9H9zM0 10h8v8l-8-1zM9 10h11v10L9 18z" fill="#fff"/></svg></button>
        <label class="task-search">
            <svg class="task-lens" viewBox="0 0 20 20"><circle cx="12" cy="7" r="6" fill="none" stroke="#222" stroke-width="1.500"/><path d="m8 12-7 7" stroke="#222" stroke-width="1.500"/></svg>
            <input type="text" placeholder="Type here to search" aria-label="Type here to search">
            <svg class="plant" viewBox="0 0 84 48"><path d="M0 48c12-9 23-2 34-9 12-3 20-1 29 3 9 0 16 2 21 6z" fill="#7d4c30"/><path d="M8 46c10-4 20-1 28-6 12-2 18 1 28 4z" fill="#a56c48"/><path d="M38 40V18" stroke="#3d9a35" stroke-width="3"/><g fill="#4fb043"><path d="M39 20c-6-7-5-13 0-19 5 6 6 12 0 19z"/><path d="M37 24C25 23 22 17 20 10c9 2 15 6 17 14zM40 25c3-9 9-11 15-11-1 8-7 12-15 11z"/></g><g fill="#3a9536"><path d="M38 38c-7 1-12-1-14-6 6-3 11-1 14 6zM40 34c3-7 7-8 12-6 0 5-5 9-12 6zM38 30c-7 1-10-2-12-6 5-1 10 0 12 6z"/></g></svg>
        </label>
        <div class="apps">
            <button aria-label="Cortana"><svg viewBox="0 0 30 30"><circle cx="15" cy="15" r="8.500" fill="none" stroke="#fff" stroke-width="3"/></svg></button>
            <button aria-label="Task view"><svg viewBox="0 0 30 30"><path d="M5 10h13v10H5zM5 5v2h13V5M5 25v-2h13v2M23 5v7M23 18v7" fill="none" stroke="#eee"/><path d="M22 13h3v3h-3z" fill="#fff"/></svg></button>
            <button class="open" aria-label="Edge"><svg viewBox="0 0 30 30"><circle cx="15" cy="15" r="15" fill="#1d8fdc"/><path d="M1 10C5-1 30-3 30 14c0 6-8 7-10 4 2-7-8-10-19-8z" fill="#43cf74"/><path d="M1 10C7 6 16 7 19 12c-6-3-9 0-9 5 0 6 8 10 16 7C15 37-4 28 1 10z" fill="#1272c4"/><path d="M10 17c0 6 8 10 17 6-3 5-8 7-12 7C9 28 8 22 10 17z" fill="#0b4ea2"/></svg></button>
            <button class="open" aria-label="File Explorer"><svg viewBox="0 0 30 30"><path d="M1 3h10l3 3H1z" fill="#d99a0a"/><path d="M1 6h28v19H1z" fill="#fbcf5c"/><path d="M6 26V15h18v11h-5v-6h-8v6z" fill="#3c96de"/></svg></button>
            <button aria-label="Calculator"><svg viewBox="0 0 30 30"><rect x="3" width="24" height="30" rx="1" fill="#7a8791"/><path d="M6 3h18v5H6z" fill="#4fdcff"/><g fill="#d5dde3"><path d="M6 10h5v5H6zM12 10h5v5h-5zM18 10h5v5h-5zM6 16h5v5H6zM12 16h5v5h-5zM6 22h5v5H6zM12 22h5v5h-5z"/></g><path d="M18 16h6v11h-6z" fill="#12458a"/></svg></button>
            <button class="open" aria-label="SOLIDWORKS"><svg viewBox="0 0 30 30"><path d="m1 5 14-5 14 5v18l-14 5-14-5z" fill="#a81018"/><path d="m1 5 14-5 14 5-14 4z" fill="#e8282c"/><path d="M15 9v19l14-5V5z" fill="#5a070b"/><text x="3" y="20" class="app-letter">S</text><text x="15" y="20" class="app-letter">W</text><text x="12" y="29" class="app-year">2020</text></svg></button>
            <button class="open" aria-label="Screen recorder"><svg viewBox="0 0 30 30"><path d="M0 0h30v30H0z" fill="#ee7a2e"/><path d="M0 22 22 0h8L0 30zM14 30 30 12v8L21 30z" fill="#dd5c1c"/><circle cx="15" cy="14" r="5.500" fill="#f5f5dc"/><path d="M6 10V6h4M20 6h4v4M24 19v4h-4M10 23H6v-4" fill="none" stroke="#fff" stroke-width="1.500"/></svg></button>
            <button class="open" aria-label="Paint 3D"><svg viewBox="0 0 30 30"><path d="M15 0c3 6 12 12 12 19 0 6-5 11-12 11S4 25 4 19C4 13 12 6 15 0z" fill="#2ba5e4"/><path d="M15 0c4 6 11 12 12 17-6 4-10-4-20-5z" fill="#f04f86"/><path d="M7 12c10-1 12 8 20 6-3 8-12 1-22-2z" fill="#8b5fd0"/><path d="M15 0c3 5 5 6 5 9-3 0-6-1-8-4z" fill="#fcc600"/></svg></button>
        </div>
        <div class="tray">
            <span class="uv">UV</span>
            <span class="uv-text">High UV</span>
            <svg viewBox="0 0 20 20"><path d="m1 14 8-8 8 8" fill="none" stroke="#fff" stroke-width="1.500"/></svg>
            <svg viewBox="0 0 20 20"><path d="M3 6h9v9H3zM12 9l4-2v7l-4-2M4 2q5-2 9 0M4 18q5 2 9 0" fill="none" stroke="#fff"/></svg>
            <svg viewBox="0 0 20 20"><path d="M1 5h16v10H1zM18 8h1v4h-1z" fill="none" stroke="#fff"/><path d="M3 7h9v6H3z" fill="#fff"/></svg>
            <svg viewBox="0 0 20 20"><g fill="none" stroke="#fff"><path d="M12 17q0-3 4-4M8 17q1-7 8-8" /><path d="M5 17q1-10 11-12M1 17Q2 3 16 1" opacity=".6"/></g><circle cx="15" cy="16" r="1.500" fill="#fff"/></svg>
            <svg viewBox="0 0 20 20"><path d="M1 7h3l4-4v14l-4-4H1zM12 7l6 6M18 7l-6 6" fill="none" stroke="#fff"/></svg>
            <span class="lang">ENG</span>
            <span class="clock">10:38<br>08-06-2023</span>
            <svg class="notice" viewBox="0 0 22 22"><path d="M12 17h-1l-2 3-3-3H1V1h19v10" fill="none" stroke="#fff" stroke-width="1.500"/><path d="M18 12c3 3 1 8-5 7 4 0 5-3 5-7z" fill="#fff"/></svg>
        </div>
    </footer>
</body>
</html>
```
FILE: styles.css
```
* {
    box-sizing: border-box;
}
body {
    margin: 0;
    min-height: 100vh;
    display: flex;
    flex-direction: column;
    overflow: hidden;
    font-family: "Open Sans", "Noto Sans", sans-serif;
    font-size: 13px;
    color: #1a1a1a;
    background: #f7f7f7;
}
button {
    display: flex;
    align-items: center;
    justify-content: center;
    padding: 0;
    border: 0;
    background: none;
    font: inherit;
    color: inherit;
}
input {
    border: 0;
    padding: 0;
    background: none;
    font: inherit;
    min-width: 0;
    flex: 1;
}
svg {
    flex: none;
    overflow: visible;
}
button svg {
    width: 30px;
    height: 30px;
}
.sheet {
    position: absolute;
}
.caret {
    width: 20px;
    flex: none;
    display: flex;
    align-items: center;
    justify-content: center;
}
.caret::after {
    content: "";
    border: 4px solid transparent;
    border-top-color: #444;
    border-bottom: 0;
}

/* title bar */
.titlebar {
    height: 53px;
    display: flex;
    align-items: stretch;
    background: #e5e5e5;
    border-top: 1px solid #7f7f7f;
    border-bottom: 1px solid #7f7f7f;
}
.brand {
    width: 146px;
    padding-left: 5px;
    display: flex;
    align-items: center;
    background: #f7f7f7;
    border-right: 1px solid #c8c8c8;
}
.brand-mark {
    width: 20px;
    height: 20px;
    margin-right: 5px;
}
.brand-name {
    font-size: 14px;
    font-style: italic;
    color: #d8261c;
    width: 104px;
}
.brand-more {
    border: 5px solid transparent;
    border-left-color: #777;
    border-right: 0;
}
.quick {
    display: flex;
    align-items: center;
    padding-left: 22px;
}
.tool {
    width: 40px;
    height: 45px;
}
.home {
    margin-right: 3px;
}
.spaced {
    margin-left: 4px;
}
.picked {
    background: #b1b1b1;
    border: 1px solid #7a7a7a;
}
.picked-caret {
    height: 45px;
    border: 1px solid #8a8a8a;
    border-left: 0;
}
.picked-caret + .tool {
    margin-left: 2px;
}
.doc-name {
    flex: 1;
    align-self: center;
    text-align: center;
    font-size: 14px;
}
.command-search {
    width: 252px;
    height: 29px;
    align-self: center;
    display: flex;
    align-items: center;
    padding-left: 7px;
    background: #fff;
    border: 1px solid #bbb;
}
.command-search input {
    margin-left: 7px;
    font-size: 12px;
}
.prompt,
.lens {
    width: 18px;
    height: 18px;
}
.command-search .caret {
    width: 18px;
}
::placeholder {
    color: #555;
    opacity: 1;
}
.window-buttons {
    display: flex;
    align-items: center;
    padding: 0 5px 0 3px;
    color: #444;
}
.window-buttons button {
    width: 53px;
    height: 40px;
}
.window-buttons svg,
.doc-buttons svg {
    width: 24px;
    height: 24px;
}

/* render toolbar */
.render-bar {
    height: 44px;
    border-bottom: 1px solid #7f7f7f;
}
.render-tools {
    width: 568px;
    height: 100%;
    padding-left: 9px;
    display: flex;
    align-items: center;
    border-right: 1px solid #7f7f7f;
    background: radial-gradient(circle, #999 1px, transparent 2px) 3px 2px / 4px 5px repeat-y;
}
.render-tools button {
    width: 39px;
    padding-left: 9px;
}

/* ribbon */
.ribbon {
    height: 118px;
    display: flex;
    padding-top: 1px;
    border-right: 1px solid #7f7f7f;
    border-bottom: 1px solid #7f7f7f;
}
.group {
    height: 114px;
    display: flex;
    border-right: 1px solid #bdbdbd;
}
.big {
    flex-direction: column;
    justify-content: flex-start;
    padding-top: 13px;
    line-height: 19px;
}
.big svg {
    margin-bottom: 2px;
}
.big.menu {
    position: relative;
    padding-top: 6px;
}
.big.menu::after {
    content: "";
    position: absolute;
    bottom: 9px;
    left: calc(50% - 4px);
    border: 4px solid transparent;
    border-top-color: #333;
    border-bottom: 0;
}
.stack {
    display: flex;
    flex-direction: column;
}
.stack button {
    height: 38px;
    justify-content: flex-start;
    gap: 6px;
}
.stack svg {
    width: 28px;
    height: 28px;
}
.boss {
    width: 324px;
    padding-left: 6px;
}
.boss .big {
    width: 71px;
}
.boss .stack {
    margin-left: 6px;
}
.cut {
    width: 318px;
    padding-left: 4px;
}
.cut .big {
    width: 58px;
}
.cut .stack {
    margin-left: 10px;
}
.detail {
    width: 285px;
}
.detail .big {
    width: 48px;
}
.detail .stack {
    width: 80px;
}
.detail .big + .stack {
    margin-left: 9px;
}
.refs {
    width: 127px;
}
.refs .big {
    width: 72px;
}
.refs .big:last-child {
    width: 52px;
}
.instant {
    width: 72px;
    height: 115px;
    padding-top: 12px;
    background: #b1b1b1;
    border: 1px solid #6e6e6e;
}

/* workspace */
.workspace {
    flex: 1;
    position: relative;
    display: flex;
    flex-direction: column;
    background: radial-gradient(ellipse 600px 90px at 85% 0, #dfe3ec, transparent),
        radial-gradient(ellipse 700px 210px at 58% 37%, #e0e3ee, transparent),
        linear-gradient(#fff 28%, #e3e6f0 54%, #e7eaf2 57%, #fff 69%, #fff 85%, #f3f5f8);
}
.scene {
    position: absolute;
    inset: 0;
    width: 100%;
    height: 100%;
}
.view-name {
    font: 18px Lato, sans-serif;
    fill: #111;
}
.axis {
    font: 11px "Liberation Sans", sans-serif;
}
.outline,
.round {
    fill: none;
    stroke: #111;
}
.outline,
.dims {
    shape-rendering: crispEdges;
}
.dims,
.leader {
    fill: none;
    stroke: #00f;
}
.arrows {
    fill: #00f;
    stroke: #00f;
}
.dim-text {
    font: 300 21px Lato, sans-serif;
    fill: #00f;
}
.tab-row {
    position: relative;
    height: 28px;
    display: flex;
    align-items: flex-start;
}
.tabs {
    display: grid;
    grid-template-columns: 80px 62px 98px 94px 74px 136px 173px;
    font-size: 14px;
    color: #333;
}
.tabs button {
    height: 28px;
    background: #d3d3d3;
    border-right: 1px solid #7f7f7f;
    border-bottom: 1px solid #7f7f7f;
}
.tabs .active {
    background: #f7f7f7;
    border-bottom: 0;
    font-weight: bold;
}
.headsup {
    height: 42px;
    margin-left: 150px;
    display: flex;
    align-items: center;
    opacity: .85;
}
.headsup button {
    width: 38px;
}
.headsup .look {
    width: 46px;
}
.headsup svg {
    width: 28px;
    height: 28px;
}
.headsup .caret {
    width: 14px;
}
.headsup .caret::after {
    border-top-color: #999;
}
.doc-buttons {
    height: 42px;
    margin-left: auto;
    padding-right: 7px;
    display: flex;
    align-items: center;
    color: #999;
}
.doc-buttons button {
    width: 38px;
}

/* feature tree */
.sidebar {
    position: relative;
    flex: 1;
    width: 273px;
    display: flex;
    flex-direction: column;
    font-size: 14px;
    background: #f7f7f7;
    border-right: 1px solid #7f7f7f;
}
.dot {
    width: 7px;
    height: 7px;
    border: 1px solid #999;
    border-radius: 50%;
    background: #ccc;
}
.grip {
    height: 21px;
    margin: 4px 2px 4px 0;
    display: flex;
    align-items: center;
    justify-content: center;
    border-top: 1px solid #bbb;
    border-bottom: 1px solid #bbb;
}
.panel-tabs {
    display: flex;
    height: 38px;
    margin: 0 2px;
    border-bottom: 1px solid #bbb;
}
.panel-tabs button {
    width: 52px;
    background: #d3d3d3;
    border: 1px solid #7f7f7f;
    border-left: 0;
}
.panel-tabs .active {
    background: #f7f7f7;
    border-bottom: 0;
}
.panel-tabs svg {
    width: 27px;
    height: 27px;
}
.filter {
    height: 32px;
    margin: 0 5px;
    padding: 0 2px;
    display: flex;
    align-items: center;
    border: 1px solid #bbb;
}
.filter svg,
.root svg,
.tree svg {
    width: 18px;
    height: 18px;
}
.root {
    margin-right: 3px;
    padding-left: 4px;
    height: 24px;
    line-height: 24px;
    display: flex;
    align-items: center;
    gap: 5px;
    white-space: nowrap;
}
.tree {
    list-style: none;
    margin: 0 2px 0 0;
    padding: 0 0 0 9px;
    height: 244px;
    border-bottom: 4px solid #3a8dc7;
}
.tree li {
    height: 24px;
    padding-left: 18px;
    display: flex;
    align-items: center;
    gap: 5px;
}
.tree .closed {
    padding-left: 0;
}
.closed::before {
    content: "";
    margin-right: 9px;
    border: 4px solid transparent;
    border-left-color: #555;
    border-right: 0;
}
.scrollbar {
    height: 20px;
    margin-top: auto;
    margin-bottom: 5px;
    display: flex;
    background: #eee;
}
.scrollbar button {
    width: 22px;
}
.scrollbar svg {
    width: 10px;
    height: 12px;
}
.track {
    flex: 1;
}
.thumb {
    width: 81%;
    height: 100%;
    background: #cdcdcd;
}
.splitter {
    position: absolute;
    left: 272px;
    top: 334px;
    width: 12px;
    height: 49px;
    display: flex;
    align-items: center;
    justify-content: center;
    background: #f7f7f7;
    border: 1px solid #7f7f7f;
    border-left: 0;
}

/* captions over the view */
.headline,
.subhead {
    position: absolute;
    margin: 0;
    font-weight: bold;
    color: #ed1c24;
    white-space: nowrap;
}
.headline {
    top: -26px;
    left: 1098px;
    height: 76px;
    font-size: 76px;
    line-height: 78px;
    overflow: hidden;
    border-bottom: 1px solid #ed1c24;
}
.subhead {
    top: 585px;
    left: 1279px;
    height: 76px;
    font-size: 78px;
    line-height: 70px;
    border-bottom: 4px solid #ed1c24;
}

/* bottom rows */
.model-tabs {
    height: 21px;
    display: flex;
    border-top: 1px solid #7f7f7f;
    border-bottom: 1px solid #7f7f7f;
    font-size: 15px;
    line-height: 18px;
}
.steps {
    display: flex;
    width: 83px;
    background: #a9abc4;
}
.steps button {
    flex: 1;
    border: 1px solid #8386a0;
}
.steps svg {
    width: 14px;
    height: 14px;
}
.model {
    width: 144px;
    padding-right: 12px;
    background: #d3d3d3;
    border-right: 1px solid #7f7f7f;
}
.model.active {
    width: 76px;
    padding: 0;
    background: #f7f7f7;
    font-weight: bold;
}
.status {
    height: 21px;
    display: flex;
    align-items: center;
    overflow: hidden;
    background: #e5e5e5;
    padding: 2px 3px 0 1px;
    font-size: 14px;
}
.state {
    margin-left: auto;
    width: 100px;
    border-right: 1px solid #ccc;
}
.units {
    width: 172px;
    padding-left: 102px;
}
.up {
    border: 4px solid transparent;
    border-bottom-color: #444;
    border-top: 0;
}
.tag {
    width: 16px;
    height: 14px;
    margin-left: 25px;
}

/* taskbar */
.taskbar {
    height: 50px;
    padding-top: 1px;
    display: flex;
    align-items: stretch;
    color: #f2f2f2;
    font-size: 15px;
    background: repeating-linear-gradient(90deg, #000 0 5px, #fff 5px 8px) top / 100% 1px no-repeat,
        linear-gradient(90deg, #23272a, #2b2a29 27%, #3a3633 38%, #2c2c2b 45%, #2a2c2d);
}
.start {
    width: 60px;
}
.start svg {
    width: 20px;
    height: 20px;
}
.task-search {
    width: 430px;
    padding-left: 15px;
    display: flex;
    align-items: center;
    background: #f2f2f2;
}
.task-search input {
    margin-left: 15px;
    font-size: 17px;
}
.task-lens {
    width: 20px;
    height: 20px;
}
.plant {
    width: 84px;
    height: 48px;
    margin-right: 3px;
}
.apps {
    display: flex;
}
.apps button {
    width: 62px;
    padding-bottom: 1px;
}
.apps .open {
    background: linear-gradient(#76b9ed, #76b9ed) center bottom / 51px 3px no-repeat;
}
.app-letter {
    font: bold 15px "Liberation Sans", sans-serif;
    fill: #fff;
}
.app-year {
    font: bold 8px "Liberation Sans", sans-serif;
    fill: #fff;
}
.tray {
    margin-left: auto;
    padding-right: 30px;
    display: flex;
    align-items: center;
    gap: 9px;
}
.tray svg {
    width: 20px;
    height: 20px;
}
.uv {
    width: 30px;
    height: 30px;
    line-height: 30px;
    border-radius: 50%;
    text-align: center;
    font-size: 11px;
    font-weight: bold;
    background: linear-gradient(160deg, #f2b927, #f06a12);
}
.uv-text {
    font-size: 17px;
    margin: 0 15px 0 1px;
}
.lang {
    font-size: 14px;
    margin: 0 7px;
}
.clock {
    text-align: center;
    font-size: 14px;
    line-height: 23px;
    margin-right: 15px;
}
.tray .notice {
    width: 22px;
    height: 22px;
}
```
